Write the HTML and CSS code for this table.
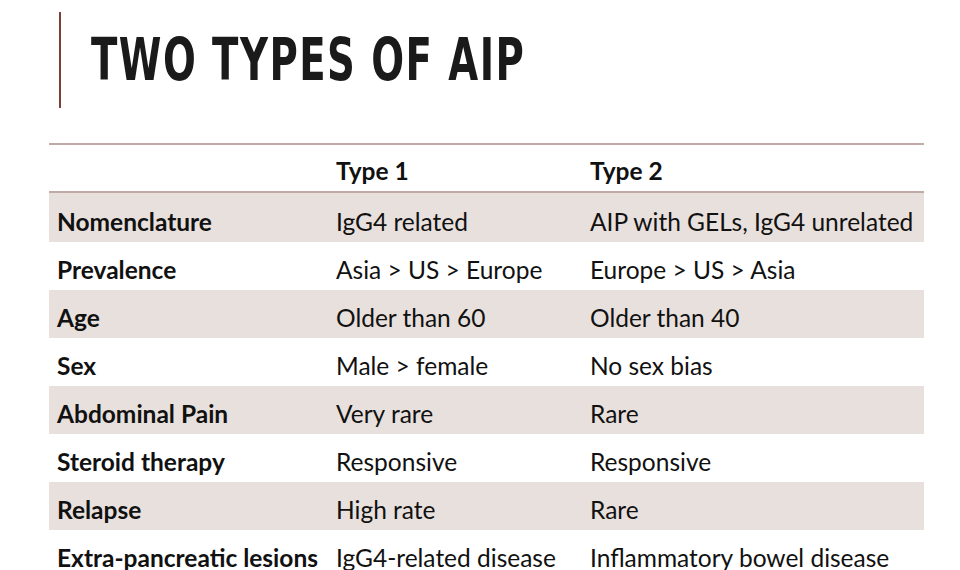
FILE: index.html
```html
<!DOCTYPE html>
<html>
<head>
<meta charset="utf-8">
<link rel="stylesheet" href="styles.css">
</head>
<body>
<div class="slide">
  <header class="head">
    <div class="bar"></div>
    <h1 class="title">TWO TYPES OF AIP</h1>
  </header>
  <table class="grid">
    <colgroup><col class="c1"><col class="c2"><col class="c3"></colgroup>
    <thead>
      <tr><th></th><th>Type 1</th><th>Type 2</th></tr>
    </thead>
    <tbody>
      <tr class="shade first"><th>Nomenclature</th><td>IgG4 related</td><td>AIP with GELs, IgG4 unrelated</td></tr>
      <tr><th>Prevalence</th><td>Asia &gt; US &gt; Europe</td><td>Europe &gt; US &gt; Asia</td></tr>
      <tr class="shade"><th>Age</th><td>Older than 60</td><td>Older than 40</td></tr>
      <tr><th>Sex</th><td>Male &gt; female</td><td>No sex bias</td></tr>
      <tr class="shade"><th>Abdominal Pain</th><td>Very rare</td><td>Rare</td></tr>
      <tr><th>Steroid therapy</th><td>Responsive</td><td>Responsive</td></tr>
      <tr class="shade"><th>Relapse</th><td>High rate</td><td>Rare</td></tr>
      <tr><th>Extra-pancreatic lesions</th><td>IgG4-related disease</td><td>Inflammatory bowel disease</td></tr>
    </tbody>
  </table>
</div>
</body>
</html>
```
FILE: styles.css
```css
html, body { margin: 0; padding: 0; background: #fff; }
body { width: 960px; height: 570px; overflow: hidden; }
.slide { padding: 12px 0 0 49px; }
.head { display: flex; align-items: center; height: 96px; }
.bar { width: 2px; align-self: stretch; background: #7b3f35; margin-left: 10px; }
.title {
  margin: 0 0 0 30px;
  font-family: "DejaVu Sans", sans-serif;
  font-stretch: condensed;
  font-weight: 700;
  font-size: 58px;
  letter-spacing: 2px;
  color: #1a1a1a;
  line-height: 1;
  transform: scaleX(0.74);
  transform-origin: left center;
  white-space: nowrap;
}
.grid {
  margin-top: 35px;
  width: 875px;
  table-layout: fixed;
  border-collapse: collapse;
  font-family: "Lato", "Open Sans", sans-serif;
  font-size: 24.5px;
  color: #111;
}
.c1 { width: 279px; }
.c2 { width: 254px; }
.c3 { width: 342px; }
.grid thead tr { border-top: 2px solid #bfaaa5; border-bottom: 2px solid #bfaaa5; }
.grid th, .grid td { box-sizing: border-box; text-align: left; padding: 7px 8px 0; height: 48px; white-space: nowrap; overflow: visible; }
.grid thead th { font-weight: 700; height: 48px; padding-top: 5px; }
.grid tbody th { font-weight: 700; }
.grid td { font-weight: 400; }
.shade { background: #e8e0dc; }
.first th, .first td { height: 50px; }
```
